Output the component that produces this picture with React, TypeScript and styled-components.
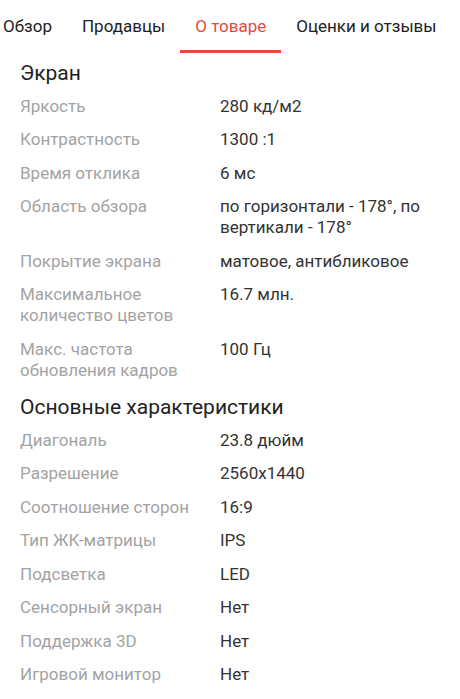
import React from "react";
import styled, { createGlobalStyle } from "styled-components";

const Global = createGlobalStyle`
  html, body { margin: 0; padding: 0; background: #fff; }
  body { font-family: Roboto, "Noto Sans", Arial, sans-serif; -webkit-font-smoothing: antialiased; }
  * { box-sizing: border-box; }
`;

const Page = styled.div`
  width: 460px;
  height: 699px;
  overflow: hidden;
  background: #fff;
`;

const Tabs = styled.div`
  display: flex;
  margin-left: -12px;
  white-space: nowrap;
`;

const Tab = styled.div<{ $active?: boolean }>`
  padding: 0 15px;
  height: 53px;
  display: flex;
  align-items: center;
  padding-top: 2px;
  font-size: 17px;
  color: ${(p) => (p.$active ? "#e64a3b" : "#222")};
  border-bottom: 3px solid ${(p) => (p.$active ? "#e64a3b" : "transparent")};
`;

const Section = styled.div`
  padding: 0 20px;
`;

const Heading = styled.h2`
  margin: 0;
  font-weight: 400;
  font-size: 21px;
  line-height: 24px;
  color: #222;
  padding: 8px 0 4.5px;
`;

const Row = styled.div`
  display: grid;
  grid-template-columns: 200px 1fr;
  font-size: 17px;
  line-height: 21px;
  padding: 6px 0 6.5px;
`;

const Label = styled.div`
  color: #a3a3a3;
  padding-right: 14px;
`;

const Value = styled.div`
  color: #333;
`;

const screen: [string, string][] = [
  ["Яркость", "280 кд/м2"],
  ["Контрастность", "1300 :1"],
  ["Время отклика", "6 мс"],
  ["Область обзора", "по горизонтали - 178°, по вертикали - 178°"],
  ["Покрытие экрана", "матовое, антибликовое"],
  ["Максимальное количество цветов", "16.7 млн."],
  ["Макс. частота обновления кадров", "100 Гц"],
];

const main: [string, string][] = [
  ["Диагональ", "23.8 дюйм"],
  ["Разрешение", "2560x1440"],
  ["Соотношение сторон", "16:9"],
  ["Тип ЖК-матрицы", "IPS"],
  ["Подсветка", "LED"],
  ["Сенсорный экран", "Нет"],
  ["Поддержка 3D", "Нет"],
  ["Игровой монитор", "Нет"],
];

export default function App() {
  return (
    <Page>
      <Global />
      <Tabs>
        <Tab>Обзор</Tab>
        <Tab>Продавцы</Tab>
        <Tab $active>О товаре</Tab>
        <Tab>Оценки и отзывы</Tab>
      </Tabs>
      <Section>
        <Heading>Экран</Heading>
        {screen.map(([l, v]) => (
          <Row key={l}>
            <Label>{l}</Label>
            <Value>{v}</Value>
          </Row>
        ))}
        <Heading>Основные характеристики</Heading>
        {main.map(([l, v]) => (
          <Row key={l}>
            <Label>{l}</Label>
            <Value>{v}</Value>
          </Row>
        ))}
      </Section>
    </Page>
  );
}
